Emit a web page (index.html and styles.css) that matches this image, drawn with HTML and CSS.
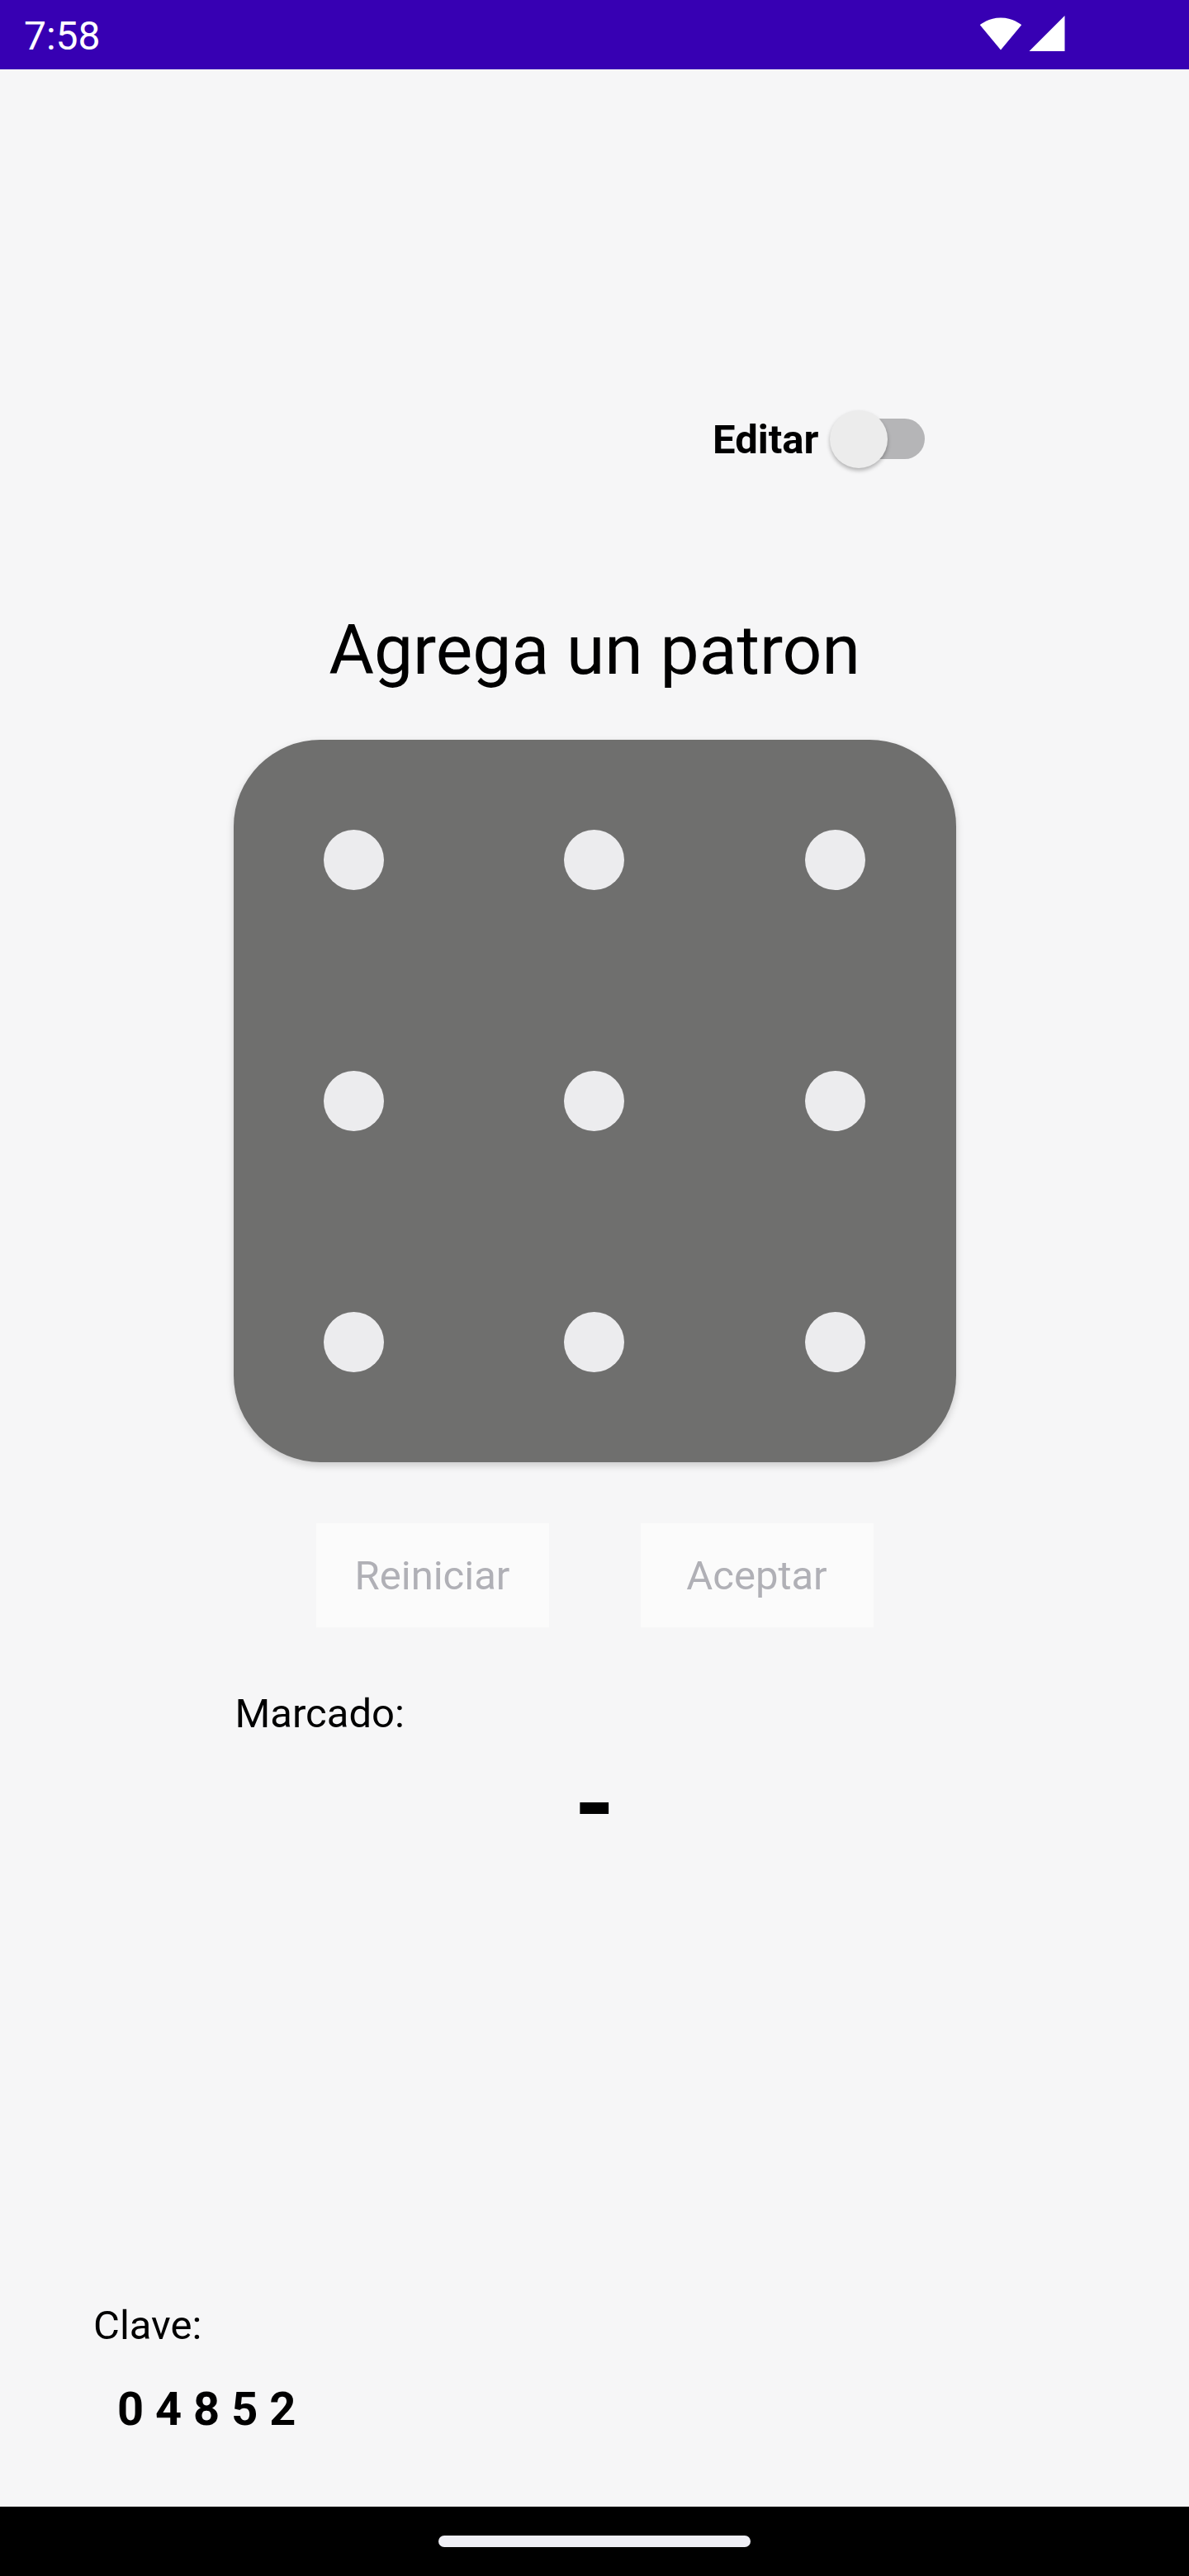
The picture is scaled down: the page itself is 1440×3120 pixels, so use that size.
FILE: index.html
```html
<!DOCTYPE html>
<html lang="es">
<head>
<meta charset="utf-8">
<title>Patron</title>
<link rel="stylesheet" href="styles.css">
</head>
<body>
<div class="screen">
  <div class="status-bar">
    <span class="time">7:58</span>
    <div class="status-icons">
      <svg class="wifi" viewBox="0 0 24 18.6" width="52" height="42"><path d="M12 18.3 L23.6 4.3 C23.2 4 18.7 0.3 12 0.3 C5.3 0.3 0.8 4 0.4 4.3 Z" fill="#fff"/></svg>
      <svg class="signal" viewBox="0 0 20 20" width="44" height="43"><path d="M0 20 H20 V0 Z" fill="#fff"/></svg>
    </div>
  </div>

  <main class="content">
    <div class="edit-row">
      <span class="edit-label">Editar</span>
      <div class="switch">
        <div class="switch-track"></div>
        <div class="switch-thumb"></div>
      </div>
    </div>

    <h1 class="title">Agrega un patron</h1>

    <div class="pattern">
      <div class="cell"><span class="dot"></span></div>
      <div class="cell"><span class="dot"></span></div>
      <div class="cell"><span class="dot"></span></div>
      <div class="cell"><span class="dot"></span></div>
      <div class="cell"><span class="dot"></span></div>
      <div class="cell"><span class="dot"></span></div>
      <div class="cell"><span class="dot"></span></div>
      <div class="cell"><span class="dot"></span></div>
      <div class="cell"><span class="dot"></span></div>
    </div>

    <div class="actions">
      <button class="btn" disabled>Reiniciar</button>
      <button class="btn" disabled>Aceptar</button>
    </div>

    <div class="marked">
      <p class="marked-label">Marcado:</p>
      <p class="marked-value">-</p>
    </div>

    <div class="key">
      <p class="key-label">Clave:</p>
      <p class="key-value">0 4 8 5 2</p>
    </div>
  </main>

  <div class="nav-bar">
    <span class="home-pill"></span>
  </div>
</div>
</body>
</html>
```
FILE: styles.css
```css
* {
  box-sizing: border-box;
}

html, body {
  margin: 0;
  padding: 0;
}

body {
  font-family: Roboto, "Liberation Sans", sans-serif;
  background: #f6f6f7;
  color: #000;
}

.screen {
  width: 1440px;
  height: 3120px;
  display: flex;
  flex-direction: column;
}

/* status bar */
.status-bar {
  height: 84px;
  flex: 0 0 84px;
  background: #3700b3;
  display: flex;
  justify-content: space-between;
  align-items: flex-start;
  padding: 16px 150px 0 29px;
}

.time {
  color: #fff;
  font-size: 48px;
  line-height: 56px;
}

.status-icons {
  display: flex;
  align-items: flex-end;
  gap: 8px;
  padding-top: 3px;
}

.wifi, .signal {
  display: block;
}

/* content */
.content {
  flex: 1 1 auto;
  display: flex;
  flex-direction: column;
  background: #f6f6f7;
}

.edit-row {
  width: 875px;
  margin: 413px auto 0;
  padding-right: 38px;
  display: flex;
  justify-content: flex-end;
  align-items: center;
  height: 70px;
}

.edit-label {
  font-size: 49px;
  font-weight: 700;
  margin-right: 13px;
}

.switch {
  position: relative;
  width: 115px;
  height: 70px;
}

.switch-track {
  position: absolute;
  left: 10px;
  right: 0;
  top: 10px;
  height: 49px;
  border-radius: 25px;
  background: #b5b5b7;
}

.switch-thumb {
  position: absolute;
  left: 0;
  top: 0;
  width: 70px;
  height: 70px;
  border-radius: 50%;
  background: #ececec;
  box-shadow: 0 3px 5px rgba(0, 0, 0, 0.28);
}

.title {
  margin: 171px 0 0;
  font-size: 84px;
  font-weight: 400;
  text-align: center;
  line-height: normal;
}

.pattern {
  width: 875px;
  height: 875px;
  margin: 59px auto 0;
  border-radius: 105px;
  background: #6f6f6e;
  box-shadow: 0 4px 10px rgba(0, 0, 0, 0.18);
  display: grid;
  grid-template-columns: repeat(3, 1fr);
  grid-template-rows: repeat(3, 1fr);
}

.cell {
  display: flex;
  align-items: center;
  justify-content: center;
}

.dot {
  width: 73px;
  height: 73px;
  border-radius: 50%;
  background: #ececee;
}

.actions {
  display: flex;
  justify-content: center;
  gap: 111px;
  margin-top: 74px;
}

.btn {
  width: 282px;
  height: 126px;
  border: none;
  border-radius: 0;
  background: #fbfbfb;
  color: #b0b0b6;
  font-family: Roboto, "Liberation Sans", sans-serif;
  font-size: 49px;
  padding: 0;
}

.marked {
  width: 875px;
  margin: 76px auto 0;
}

.marked-label {
  margin: 0;
  padding-left: 2px;
  font-size: 49px;
  line-height: normal;
}

.marked-value {
  margin: 8px 0 0;
  text-align: center;
  font-size: 126px;
  font-weight: 700;
  line-height: normal;
}

.key {
  margin-top: auto;
  padding: 0 0 85px 113px;
}

.key-label {
  margin: 0;
  font-size: 49px;
  line-height: normal;
}

.key-value {
  margin: 40px 0 0;
  padding-left: 29px;
  font-size: 56px;
  font-weight: 700;
  line-height: normal;
}

/* navigation bar */
.nav-bar {
  height: 84px;
  flex: 0 0 84px;
  background: #000;
  display: flex;
  justify-content: center;
  padding-top: 35px;
}

.home-pill {
  width: 378px;
  height: 14px;
  border-radius: 7px;
  background: #eeeef4;
}
```
